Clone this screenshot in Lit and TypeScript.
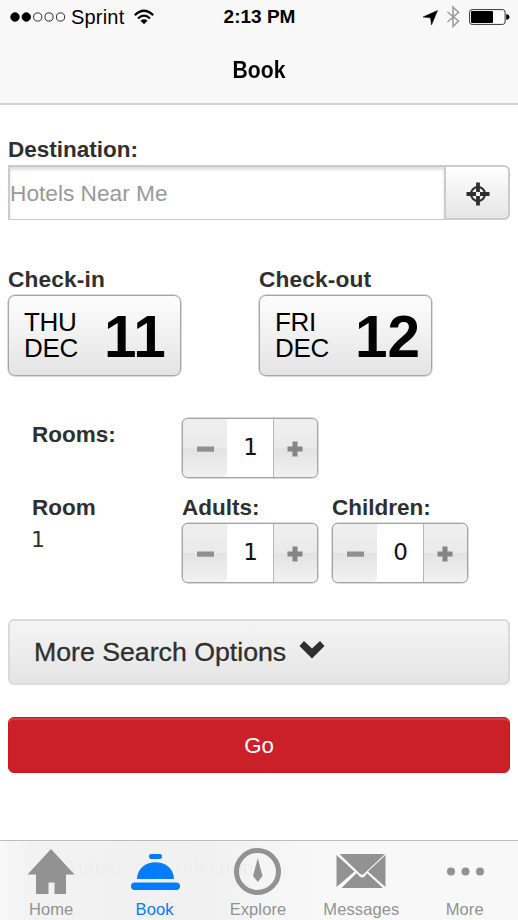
import { LitElement, html, css, svg } from "lit";
import { customElement, property } from "lit/decorators.js";

@customElement("count-stepper")
class CountStepper extends LitElement {
  @property({ type: Number }) value = 0;

  static styles = css`
    :host { display: block; }
    .box {
      box-sizing: border-box;
      width: 136px;
      height: 60px;
      border: 1.5px solid #a5a5a5;
      border-radius: 6px;
      display: grid;
      grid-template-columns: 44px 1fr 44px;
      overflow: hidden;
      background: #fff;
      font: 23px/58px "DejaVu Sans", sans-serif;
      color: #111;
      text-align: center;
      box-shadow: 0 0 0 0.5px #b5b5b5;
    }
    .btn {
      background: linear-gradient(#efefef 0, #eaeaea 50%, #e3e3e3 51%, #f1f1f1 100%);
      display: flex;
      align-items: center;
      justify-content: center;
    }
    .minus { border-radius: 0 0 5px 0; }
    .plus { border-left: 1px solid #b8b8b8; padding-right: 2px; }
    .btn svg { margin-top: 2px; }
    .num { line-height: 57px; letter-spacing: -1px; }
  `;

  render() {
    return html`<div class="box">
      <div class="btn minus">
        <svg width="17" height="16"><rect x="0" y="5.500" width="17" height="5.200" fill="#8f8f8f" /></svg>
      </div>
      <div class="num">${this.value}</div>
      <div class="btn plus">
        <svg width="16" height="16"><path d="M5.500 .5h5v5h5v5h-5v5h-5v-5h-5v-5h5z" fill="#858585" /></svg>
      </div>
    </div>`;
  }
}

@customElement("date-button")
class DateButton extends LitElement {
  @property() weekday = "";
  @property() month = "";
  @property() day = "";

  static styles = css`
    :host { display: block; }
    .box {
      box-sizing: border-box;
      width: 173px;
      height: 81px;
      border: 1.5px solid #a6a6a6;
      border-radius: 7px;
      background: linear-gradient(#fdfdfd, #e4e4e4);
      display: flex;
      justify-content: space-between;
      align-items: center;
      padding: 0 11px 0 15px;
      color: #000;
      font-family: "Liberation Sans", Arial, sans-serif;
      box-shadow: 0 0 0 0.5px #b5b5b5;
    }
    .words { font-size: 26px; line-height: 26px; letter-spacing: -0.3px; margin-top: -1px; }
    .day { font-size: 58.5px; line-height: 76px; font-weight: 700; width: 65px; padding-top: 3px; }
  `;

  render() {
    return html`<div class="box">
      <div class="words"><div>${this.weekday}</div><div>${this.month}</div></div>
      <div class="day">${this.day}</div>
    </div>`;
  }
}

const tabs = [
  {
    name: "Home",
    icon: svg`<path d="M27 5L50.500 30.500H42V50H30.500V38.500H24.500V50H12V30.500H3.500Z" />`,
  },
  {
    name: "Book",
    active: true,
    icon: svg`<rect x="21" y="10" width="13" height="5" rx="2" />
      <path d="M9 35C9.500 12.500 45.500 12.500 46 35Z" />
      <rect x="3" y="38.500" width="49" height="7.500" rx="3.700" />`,
  },
  {
    name: "Explore",
    icon: svg`<circle cx="26.500" cy="27.500" r="21" fill="none" stroke="currentColor" stroke-width="5" />
      <path d="M26.800 14L31.500 32L26.800 38L22 32Z" />`,
  },
  {
    name: "Messages",
    icon: svg`<path d="M5.500 10H51L30 29.800Q28 31.500 26 29.800ZM2.500 11L20.500 27.500L2.500 43ZM51.500 11V43L34 27.500ZM22.500 29.300L26 32.700Q28.300 34.200 30.500 32.700L33 29.300L49 44H7.500Z" />`,
  },
  {
    name: "More",
    icon: svg`<circle cx="13" cy="27.500" r="4" /><circle cx="27.500" cy="27.500" r="4" /><circle cx="42" cy="27.500" r="4" />`,
  },
];

@customElement("app-root")
class AppRoot extends LitElement {
  static styles = css`
    :host {
      display: flex;
      flex-direction: column;
      width: 518px;
      height: 920px;
      overflow: hidden;
      background: #fff;
      color: #2f2f2f;
      font-family: "Liberation Sans", Arial, sans-serif;
    }
    header {
      box-sizing: border-box;
      height: 105px;
      flex: none;
      background: #f8f8f8;
      border-bottom: 2px solid #d3d3d3;
      color: #000;
    }
    .status {
      display: grid;
      grid-template-columns: 1fr auto 1fr;
      align-items: center;
      height: 33px;
      padding: 0 8px 0 10px;
    }
    .left, .right { display: flex; align-items: center; }
    .right { justify-content: flex-end; }
    .carrier { font-size: 20px; line-height: 24px; margin-left: 5px; letter-spacing: 0.2px; }
    .wifi { margin-left: 10px; }
    .clock { font-size: 19px; font-weight: 700; line-height: 24px; margin-left: -1px; }
    .title {
      width: fit-content;
      margin: 23px auto 0;
      font-size: 24px;
      line-height: 28px;
      font-weight: 700;
      transform: scaleX(0.88);
    }
    main { flex: 1; padding: 32px 8px 0; }
    .label { font-size: 22.5px; line-height: 26px; font-weight: 700; height: 28px; white-space: nowrap; }
    .dest { display: flex; height: 55px; }
    .field {
      box-sizing: border-box;
      width: 438px;
      border: 2px solid #cbcbcb;
      border-bottom-width: 1.5px;
      box-shadow: inset 0 3px 3px #e0e0e0;
      font-size: 22.7px;
      line-height: 53px;
      color: #999;
    }
    .locate {
      box-sizing: border-box;
      width: 64px;
      border: 2px solid #cbcbcb;
      border-left: none;
      border-radius: 0 6px 6px 0;
      background: linear-gradient(#fff, #e5e5e5);
      display: flex;
      align-items: center;
      justify-content: center;
      padding: 2px 0 0 1px;
    }
    .dates { display: flex; gap: 78px; margin-top: 46px; }
    .dates .label { font-size: 22.7px; height: 29px; letter-spacing: 0.15px; }
    .rooms {
      display: grid;
      grid-template-columns: 150px 150px 150px;
      padding-left: 24px;
      margin-top: 42px;
    }
    .rooms .first { padding-top: 4px; }
    .rooms.second { margin-top: 17px; }
    .roomno { font: 22px/28px "DejaVu Sans", sans-serif; padding-top: 3px; margin-left: -1px; }
    .more {
      box-sizing: border-box;
      height: 66px;
      margin-top: 36px;
      border: 2px solid #dadada;
      border-radius: 6px;
      background: linear-gradient(#f5f5f5, #e4e4e4);
      padding-left: 24px;
      display: flex;
      align-items: center;
      font-size: 26.7px;
      text-shadow: 0 1px 0 #fff;
      -webkit-text-stroke: 0.35px currentColor;
    }
    .more svg { margin: -5px 0 0 13px; }
    .go {
      box-sizing: border-box;
      height: 56px;
      margin-top: 32px;
      border: 1.5px solid #cb1722;
      border-radius: 6px;
      box-shadow: inset 0 2px 0 #d43c48;
      background: #ca2128;
      color: #fff;
      text-align: center;
      font-size: 22.3px;
      line-height: 55px;
    }
    nav {
      box-sizing: border-box;
      position: relative;
      height: 80px;
      flex: none;
      border-top: 1.5px solid #bcbcbc;
      background: linear-gradient(90deg, #f8f8f8 0, #f2f2f2 6%, #f1f1f1 40%, #f8f8f8 62%);
      display: grid;
      grid-template-columns: repeat(5, 103.4px);
      color: #929292;
    }
    .ghost {
      position: absolute;
      left: 62px;
      top: 13px;
      font: 22px/26px "Liberation Serif", serif;
      color: #ededed;
      filter: blur(0.7px);
      white-space: nowrap;
    }
    .tab {
      position: relative;
      display: flex;
      flex-direction: column;
      align-items: center;
      font-size: 16.5px;
      line-height: 20px;
      letter-spacing: 0.1px;
      margin-left: -1px;
    }
    .tab svg { fill: currentColor; margin-top: 3px; margin-bottom: 2px; }
    .on { color: #067cfd; }
  `;

  render() {
    return html`
      <header>
        <div class="status">
          <div class="left">
            <svg width="56" height="12" stroke="#000">
              <circle cx="5" cy="6" r="4.200" />
              <circle cx="16.300" cy="6" r="4.200" />
              <circle cx="27.700" cy="6" r="4.100" fill="none" stroke-width=".8" />
              <circle cx="39" cy="6" r="4.100" fill="none" stroke-width=".8" />
              <circle cx="50.500" cy="6" r="4.100" fill="none" stroke-width=".8" />
            </svg>
            <span class="carrier">Sprint</span>
            <svg class="wifi" width="20" height="16" fill="none" stroke="#000" stroke-width="2.300">
              <path d="M.8 6.200Q10 -2.600 19.200 6.200M4 9.500Q10 3.800 16 9.500" />
              <path d="M6.500 11.700Q10 8.800 13.500 11.700L10 15.300Z" fill="#000" stroke="none" />
            </svg>
          </div>
          <div class="clock">2:13 PM</div>
          <div class="right">
            <svg width="87" height="24">
              <path d="M0 12L14.500 5.500L8.500 20L7.500 12.800Z" fill="#000" stroke="#000" stroke-width=".5" />
              <path d="M24.500 7L35.500 16L30 21.500V2L35.500 7.500L24.500 17" fill="none" stroke="#999" stroke-width="1.500" />
              <rect x="46.600" y="4.600" width="35.500" height="14.800" rx="2.500" fill="#fff" stroke="#333" />
              <rect x="48" y="6" width="22" height="12" rx="1" />
              <path d="M83.200 9.200Q86.500 9.500 86.500 12T83.200 14.800Z" />
            </svg>
          </div>
        </div>
        <div class="title">Book</div>
      </header>
      <main>
        <div class="label">Destination:</div>
        <div class="dest">
          <div class="field">Hotels Near Me</div>
          <div class="locate">
            <svg width="24" height="24" fill="none" stroke="#2f2f2f">
              <circle cx="12" cy="12" r="7" stroke-width="2" />
              <path d="M12 .5V10M12 14V23.500M.5 12H10M14 12H23.500" stroke-width="3.800" />
            </svg>
          </div>
        </div>
        <div class="dates">
          <div>
            <div class="label">Check-in</div>
            <date-button weekday="THU" month="DEC" day="11"></date-button>
          </div>
          <div>
            <div class="label">Check-out</div>
            <date-button weekday="FRI" month="DEC" day="12"></date-button>
          </div>
        </div>
        <div class="rooms">
          <div class="label first">Rooms:</div>
          <count-stepper .value=${1}></count-stepper>
        </div>
        <div class="rooms second">
          <div>
            <div class="label">Room</div>
            <div class="roomno">1</div>
          </div>
          <div>
            <div class="label">Adults:</div>
            <count-stepper .value=${1}></count-stepper>
          </div>
          <div>
            <div class="label">Children:</div>
            <count-stepper .value=${0}></count-stepper>
          </div>
        </div>
        <div class="more">
          <span>More Search Options</span>
          <svg width="26" height="18" fill="#2f2f2f"><path d="M5 0L13 7.500L21 0L25.500 5L13 17.500L.5 5Z" /></svg>
        </div>
        <div class="go">Go</div>
      </main>
      <nav>
        <div class="ghost">Autograph Collection</div>
        ${tabs.map(
          (t) => html`<div class="tab ${t.active ? "on" : ""}">
            <svg width="54" height="53">${t.icon}</svg>
            <span>${t.name}</span>
          </div>`
        )}
      </nav>
    `;
  }
}
